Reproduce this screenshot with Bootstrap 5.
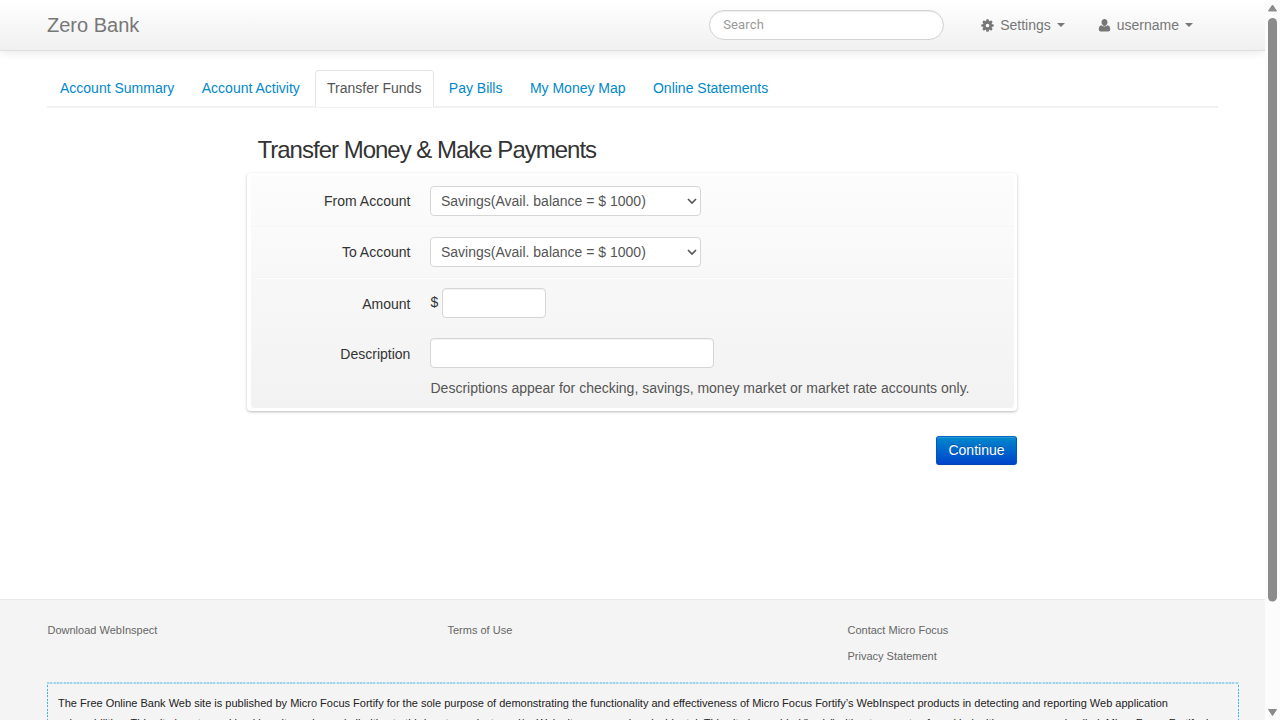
<!DOCTYPE html>
<html lang="en">
<head>
<meta charset="utf-8">
<title>Zero - Transfer Funds</title>
<meta name="viewport" content="width=device-width, initial-scale=1">
<link href="https://cdn.jsdelivr.net/npm/bootstrap@5.3.0/dist/css/bootstrap.min.css" rel="stylesheet">
<style>
html, body { height: 720px; overflow: hidden; }
body { font: 14px/20px "Liberation Sans", Arial, sans-serif; color: #333; background: #fff; }
.page { width: 1265px; height: 720px; overflow: hidden; }
.topbar { height: 51px; padding: 0 72px 0 47px; background: linear-gradient(#fff, #f0f0f0); border-bottom: 1px solid #dfdfdf; box-shadow: 0 1px 10px rgba(0,0,0,.1); }
.topbar .navbar-brand { font-size: 20px; line-height: 20px; color: #777; padding: 0; margin: 0 auto 0 0; }
.topbar .form-control { width: 235px; height: 30px; font: 13px/20px Roboto, sans-serif; letter-spacing: .15px; padding: 3px 13px 5px; border: 1px solid #d3d3d3; box-shadow: inset 0 1px 1px rgba(0,0,0,.075); margin-right: 37px; }
.topbar .form-control::placeholder { color: #999; opacity: 1; }
.topbar .nav-link { color: #777; padding: 0; line-height: 20px; }
.topbar .nav-link svg { margin-right: 6px; }
.settings-link { margin-right: 33px; }
.topbar .dropdown-toggle::after { border-width: 4px 4px 0; border-top-color: #777; margin-left: 6px; }
.account-tabs { margin: 19px 47px 0; height: 38px; border-bottom: 2px solid #f1f1f1; }
.account-tabs .nav-link { color: #0088cc; padding: 7px 12px 8px; line-height: 20px; height: 37px; border: 1px solid transparent; border-radius: 4px 4px 0 0; margin: 0 1.4px 0 0; }
.account-tabs .nav-link.active { color: #555; background: #fff; border-color: #e2e2e2 #e6e6e6 #fff; padding-left: 11.300px; padding-right: 11.400px; margin-left: .5px; margin-right: 2px; }
.transfer { width: 770px; margin: 28px 0 0 247px; }
.transfer h2 { font-size: 24px; line-height: 28px; font-weight: 400; letter-spacing: -1px; margin: 0 0 9px 10.5px; color: #333; }
.board { background: #fff; padding: 3px 3px 3px 4px; border-radius: 4px; box-shadow: 0 1px 3px rgba(0,0,0,.27); }
.board-inner { height: 232px; background: linear-gradient(#fcfcfc, #f2f2f2); border-radius: 3px; }
.field-row { display: grid; grid-template-columns: 159.400px 1fr; column-gap: 20px; height: 51px; padding: 10px 0; }
.field-row.ruled { border-bottom: 1px solid #f5f5f5; box-shadow: 0 1px #fcfcfc; }
.field-row.tight { height: 50px; }
.field-row label { text-align: right; line-height: 20px; padding-top: 5px; }
.field-row .low-label { padding-top: 6px; }
.field-row .form-control, .field-row .form-select { height: 30px; font-size: 14px; line-height: 20px; padding: 4px 9.600px; border: 1px solid #d6d6d6; border-radius: 4px; color: #555; background-color: #fff; }
.field-row .form-control { box-shadow: inset 0 1px 1px rgba(0,0,0,.06); }
.field-row .form-select { width: 270.600px; background-image: url("data:image/svg+xml,%3Csvg xmlns='http://www.w3.org/2000/svg' viewBox='0 0 10 7'%3E%3Cpath d='M1 1l4 4 4-4' fill='none' stroke='%23555' stroke-width='1.6'/%3E%3C/svg%3E"); background-size: 10px 7px; background-position: right 3px center; }
.field-row .amount-input { width: 103.500px; }
.field-row .desc-input { width: 283.600px; }
.note { margin: -1px 0 0 179.500px; color: #555; line-height: 20px; }
.btn-continue { color: #fff; width: 81px; height: 29px; padding: 0 0 1px; font-size: 14px; line-height: 20px; border: 1px solid; border-color: #0567c5 #0452c8 #0345b5; border-radius: 3px; background: linear-gradient(#0088cc, #0044cc); text-shadow: 0 -1px rgba(0,0,0,.25); box-shadow: inset 0 1px rgba(255,255,255,.15), 0 1px 2px rgba(0,0,0,.05); }
.btn-continue:hover { color: #fff; background: #0044cc; }
.form-buttons { margin-top: 25px; }
.site-footer { margin-top: 134px; height: 140px; background: #f4f4f4; border-top: 1px solid #e9e9e9; padding: 17px 0 0 47px; font-size: 11px; }
.footer-links { display: grid; grid-template-columns: 400px 400px 1fr; height: 65px; line-height: 26px; padding-left: .5px; }
.footer-links a { color: #666; text-decoration: none; }
.disclaimer { width: 1192px; height: 60px; padding: 11px; line-height: 20px; color: #222; white-space: nowrap;
  background:
    repeating-linear-gradient(90deg, #9fd3ea 0 2px, #d3e9f2 2px 3.330px) top / 100% 2px no-repeat,
    repeating-linear-gradient(#4db2dc 0 2px, #e3eff4 2px 3.330px) left / 1px 100% no-repeat,
    repeating-linear-gradient(#4db2dc 0 2px, #e3eff4 2px 3.330px) right / 1px 100% no-repeat; }
.scrollrail { width: 15px; background: #fcfcfc; height: 720px; }
</style>
</head>
<body class="d-flex">
<div class="page">
  <nav class="topbar navbar d-flex flex-nowrap align-items-center">
    <a class="navbar-brand" href="#">Zero Bank</a>
    <input class="form-control rounded-pill" type="text" placeholder="Search" aria-label="Search">
    <a class="nav-link dropdown-toggle settings-link d-flex align-items-center" href="#">
      <svg width="13" height="13" viewBox="0 0 14 14"><g fill="#777"><path fill-rule="evenodd" d="M7 2a5 5 0 1 0 0 10A5 5 0 0 0 7 2zm0 3a2 2 0 1 1 0 4 2 2 0 0 1 0-4z"/><path id="tooth" d="M5.800.300h2.400l.5 2.500H5.300z"/><use href="#tooth" transform="rotate(45 7 7)"/><use href="#tooth" transform="rotate(90 7 7)"/><use href="#tooth" transform="rotate(135 7 7)"/><use href="#tooth" transform="rotate(180 7 7)"/><use href="#tooth" transform="rotate(225 7 7)"/><use href="#tooth" transform="rotate(270 7 7)"/><use href="#tooth" transform="rotate(315 7 7)"/></g></svg>Settings</a>
    <a class="nav-link dropdown-toggle d-flex align-items-center" href="#">
      <svg width="13" height="13" viewBox="0 0 12 13"><path fill="#777" d="M6 0C4.200 0 3 1.300 3 3.300c0 1.900 1.300 3.700 3 3.700s3-1.800 3-3.700C9 1.300 7.800 0 6 0zM3 6.200C1 6.400.3 8 .3 10.300.3 11.900 1.100 12.500 2.200 12.500h7.600c1.100 0 1.900-.6 1.900-2.200C11.700 8 11 6.400 9 6.200 8.300 7 7.200 7.400 6 7.400S3.700 7 3 6.200z"/></svg>username</a>
  </nav>
  <ul class="nav nav-tabs account-tabs flex-nowrap">
    <li class="nav-item"><a class="nav-link" href="#">Account Summary</a></li>
    <li class="nav-item"><a class="nav-link" href="#">Account Activity</a></li>
    <li class="nav-item"><a class="nav-link active" href="#">Transfer Funds</a></li>
    <li class="nav-item"><a class="nav-link" href="#">Pay Bills</a></li>
    <li class="nav-item"><a class="nav-link" href="#">My Money Map</a></li>
    <li class="nav-item"><a class="nav-link" href="#">Online Statements</a></li>
  </ul>
  <form class="transfer">
    <h2>Transfer Money &amp; Make Payments</h2>
    <div class="board">
      <div class="board-inner">
        <div class="field-row ruled"><label for="from">From Account</label><select id="from" class="form-select"><option>Savings(Avail. balance = $ 1000)</option></select></div>
        <div class="field-row ruled"><label for="to">To Account</label><select id="to" class="form-select"><option>Savings(Avail. balance = $ 1000)</option></select></div>
        <div class="field-row tight"><label for="amount" class="low-label">Amount</label><div class="d-flex gap-1"><span class="pt-1">$</span><input id="amount" type="text" class="form-control amount-input"></div></div>
        <div class="field-row"><label for="desc" class="low-label">Description</label><input id="desc" type="text" class="form-control desc-input"></div>
        <p class="note">Descriptions appear for checking, savings, money market or market rate accounts only.</p>
      </div>
    </div>
    <div class="form-buttons d-flex justify-content-end"><button type="button" class="btn btn-continue">Continue</button></div>
  </form>
  <footer class="site-footer">
    <div class="footer-links">
      <div><a href="#">Download WebInspect</a></div>
      <div><a href="#">Terms of Use</a></div>
      <div><a href="#">Contact Micro Focus</a><br><a href="#">Privacy Statement</a></div>
    </div>
    <div class="disclaimer">The Free Online Bank Web site is published by Micro Focus Fortify for the sole purpose of demonstrating the functionality and effectiveness of Micro Focus Fortify’s WebInspect products in detecting and reporting Web application<br>vulnerabilities. This site is not a real banking site and any similarities to third party products and/or Web sites are purely coincidental. This site is provided "as is" without warranty of any kind, either express or implied. Micro Focus Fortify does</div>
  </footer>
</div>
<div class="scrollrail">
  <svg class="d-block" width="15" height="720" viewBox="0 0 15 720" fill="#8b8b8b"><path d="M7.500 5l4 6h-8z" stroke="#8b8b8b" stroke-linejoin="round"/><rect x="3" y="18" width="9" height="583.500" rx="4.500"/><path d="M3.500 709.500h8l-4 6z" stroke="#8b8b8b" stroke-linejoin="round"/></svg>
</div>
<script src="https://cdn.jsdelivr.net/npm/bootstrap@5.3.0/dist/js/bootstrap.bundle.min.js"></script>
</body>
</html>
